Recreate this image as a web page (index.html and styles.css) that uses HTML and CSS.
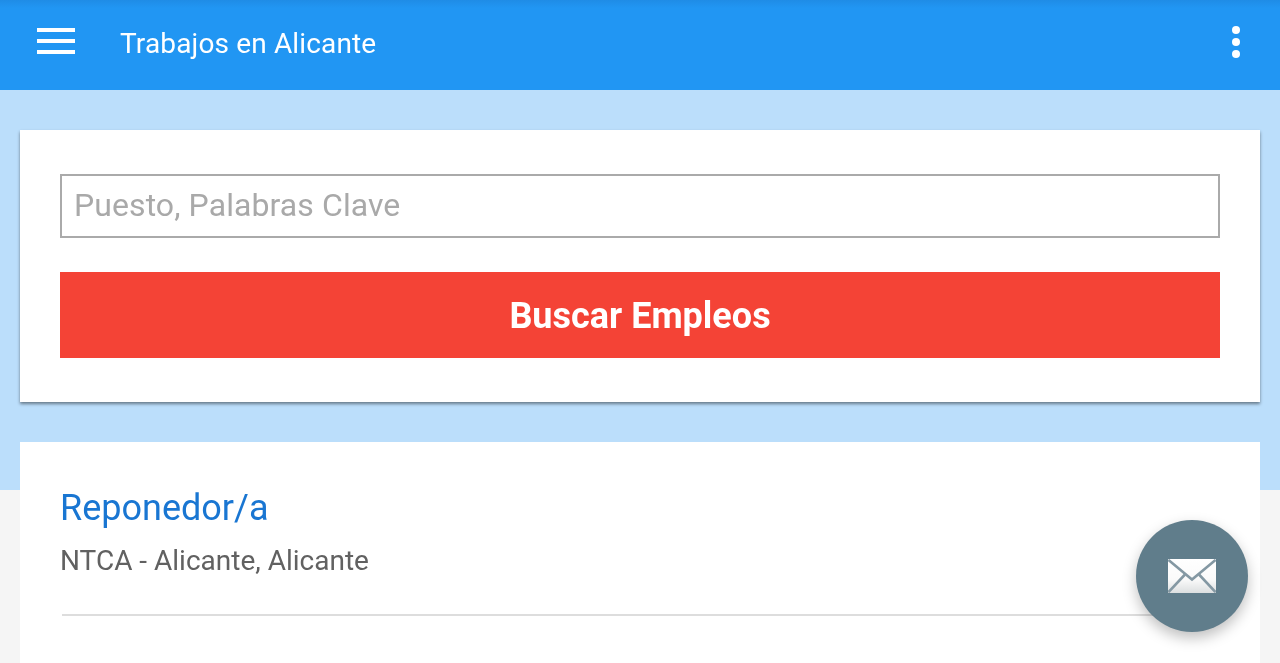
FILE: index.html
```html
<!DOCTYPE html>
<html lang="es">
<head>
<meta charset="utf-8">
<title>Trabajos en Alicante</title>
<link rel="stylesheet" href="styles.css">
</head>
<body>
<header class="topbar">
  <button class="menu" aria-label="Menú"><span></span><span></span><span></span></button>
  <h1 class="title">Trabajos en Alicante</h1>
  <button class="more" aria-label="Más"><span></span><span></span><span></span></button>
</header>
<main class="content">
  <section class="card search">
    <input class="field" type="text" placeholder="Puesto, Palabras Clave">
    <button class="submit"><span class="submit-label">Buscar Empleos</span></button>
  </section>
  <section class="card results">
    <a class="job-title" href="#">Reponedor/a</a>
    <p class="job-meta">NTCA - Alicante, Alicante</p>
    <hr class="rule">
  </section>
</main>
<button class="fab" aria-label="Correo">
  <svg class="mail" width="48" height="34" viewBox="0 0 48 34">
    <defs>
      <linearGradient id="env" x1="0" y1="0" x2="0" y2="1">
        <stop offset="0" stop-color="#ffffff"/>
        <stop offset="0.6" stop-color="#fafafa"/>
        <stop offset="1" stop-color="#dcdfe0"/>
      </linearGradient>
    </defs>
    <rect width="48" height="34" rx="1" fill="url(#env)"/>
    <path d="M0.5 1 L24 20.5 L47.5 1" fill="none" stroke="#8498a3" stroke-width="2.6"/>
    <path d="M0.5 33 L17 15.5 M47.5 33 L31 15.5" fill="none" stroke="#8498a3" stroke-width="2.6"/>
  </svg>
</button>
</body>
</html>
```
FILE: styles.css
```css
* { box-sizing: border-box; }
html, body { margin: 0; height: 663px; overflow: hidden; }
body {
  font-family: Roboto, "Liberation Sans", sans-serif;
  background: #f5f5f5;
}
.topbar {
  height: 90px;
  display: flex;
  align-items: center;
  padding: 0 32px 4px 37px;
  background: linear-gradient(#1f8ce6 0, #2196f3 8px);
}
.menu, .more {
  border: 0;
  padding: 0;
  background: none;
  display: flex;
  flex-direction: column;
}
.menu { width: 38px; gap: 7px; margin-bottom: 4px; }
.menu span { display: block; height: 4px; background: #fff; }
.title {
  margin: 0 0 0 45px;
  flex: 1;
  font-size: 28px;
  font-weight: 400;
  letter-spacing: 0.15px;
  color: #fff;
  will-change: transform;
}
.more { width: 8px; gap: 4px; margin: 0 8px 2px 0; }
.more span { display: block; width: 8px; height: 8px; border-radius: 50%; background: #fff; }
.content {
  height: 573px;
  padding: 40px 20px 0;
  display: flex;
  flex-direction: column;
  gap: 40px;
  background: linear-gradient(#bbdefb 400px, #f5f5f5 400px);
}
.card { background: #fff; padding: 0 40px; }
.search {
  padding-top: 44px;
  padding-bottom: 44px;
  box-shadow: 0 2px 3px rgba(0, 0, 0, 0.45);
}
.field {
  display: block;
  width: 100%;
  height: 64px;
  padding: 0 12px 2px;
  border: 2px solid #aaa;
  border-radius: 0;
  outline: 0;
  font: 400 32px Roboto, sans-serif;
  letter-spacing: 0.08px;
  color: #333;
  background: transparent;
  will-change: transform;
}
.field::placeholder { color: #a9a9a9; opacity: 1; }
.submit {
  display: block;
  width: 100%;
  height: 86px;
  margin-top: 34px;
  padding: 2px 0 0;
  border: 0;
  background: #f44336;
  color: #fff;
  font: 700 36px Roboto, sans-serif;
}
.submit-label { display: block; will-change: transform; }
.results { flex: 1; padding-top: 45px; }
.job-title {
  display: block;
  font-size: 36px;
  line-height: 42px;
  color: #1976d2;
  text-decoration: none;
  will-change: transform;
}
.job-meta {
  margin: 15px 0 0;
  font-size: 28px;
  line-height: 34px;
  color: #616161;
  will-change: transform;
}
.rule {
  margin: 36px 0 0 2px;
  border: 0;
  height: 2px;
  background: #ddd;
}
.fab {
  position: fixed;
  left: 1136px;
  top: 520px;
  width: 112px;
  height: 112px;
  padding: 0;
  border: 0;
  border-radius: 50%;
  background: #607d8b;
  box-shadow: 0 6px 14px rgba(0, 0, 0, 0.25);
  display: flex;
  align-items: center;
  justify-content: center;
}
.mail { display: block; }
```
